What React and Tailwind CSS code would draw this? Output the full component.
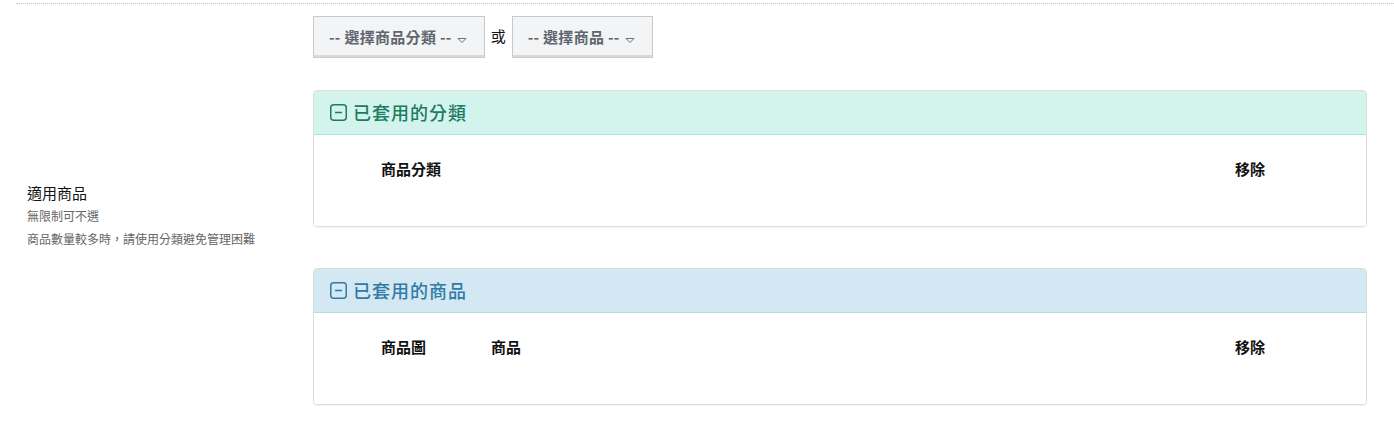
import React from "react";

const font = { fontFamily: '"Noto Sans CJK TC", "Noto Sans", sans-serif' };

function Caret() {
  return (
    <svg width="10" height="7" viewBox="0 0 10 7" className="ml-[5px] mt-[6px]">
      <path d="M1 1.5 L9 1.5 L5 5.5 Z" fill="none" stroke="#6b7280" strokeWidth="1" strokeLinejoin="round" />
    </svg>
  );
}

function MinusBox({ color }) {
  return (
    <svg width="17" height="17" viewBox="0 0 17 17" className="shrink-0">
      <rect x="0.75" y="0.75" width="15.5" height="15.5" rx="3" fill="none" stroke={color} strokeWidth="1.5" />
      <line x1="5" y1="8.5" x2="12" y2="8.5" stroke={color} strokeWidth="1.5" />
    </svg>
  );
}

function Panel({ title, headerBg, headerBorder, titleColor, children }) {
  return (
    <div className="rounded-[4px] border border-[#dcdcdc] shadow-[0_1px_1px_rgba(0,0,0,0.05)] overflow-hidden">
      <div
        className="h-[44px] flex items-center pl-[16px] gap-[6px] border-b"
        style={{ backgroundColor: headerBg, borderColor: headerBorder }}
      >
        <MinusBox color={titleColor} />
        <span className="text-[18px] font-medium tracking-[1px]" style={{ color: titleColor }}>
          {title}
        </span>
      </div>
      <div className="h-[91px] bg-white">{children}</div>
    </div>
  );
}

export default function App() {
  return (
    <div className="bg-white w-[1394px] h-[424px] pt-[3px]" style={font}>
      <div className="ml-4 border-t border-dotted border-[#c4c4c4] flex h-[421px]">
        <div className="w-[297px] shrink-0 flex items-center pl-[11px] pt-[1px]">
          <div>
            <div className="text-[15px] text-[#111] leading-[20px]">適用商品</div>
            <div className="text-[12px] text-[#666] leading-[16px] mt-[5px]">無限制可不選</div>
            <div className="text-[12px] text-[#666] leading-[16px] mt-[7px]">商品數量較多時，請使用分類避免管理困難</div>
          </div>
        </div>
        <div className="w-[1054px] pt-[12px]">
          <div className="flex items-center gap-[6px] h-[42px]">
            <button className="h-[42px] pl-[15px] pr-[17px] flex items-center bg-[#f3f4f5] border border-[#c9c9c9] shadow-[inset_0_-2px_0_#dadada] text-[15px] font-bold text-[#5f6670] tracking-[0.3px] whitespace-pre">
              {"-- 選擇商品分類 --"}
              <Caret />
            </button>
            <span className="text-[15px] text-[#111] mb-[2px]">或</span>
            <button className="h-[42px] pl-[15px] pr-[17px] flex items-center bg-[#f3f4f5] border border-[#c9c9c9] shadow-[inset_0_-2px_0_#dadada] text-[15px] font-bold text-[#5f6670] tracking-[0.3px] whitespace-pre">
              {"-- 選擇商品 --"}
              <Caret />
            </button>
          </div>
          <div className="mt-[32px]">
            <Panel title="已套用的分類" headerBg="#d2f4ed" headerBorder="#a6e8dc" titleColor="#1f7a64">
              <div className="flex justify-between pl-[67px] pr-[101px] pt-[23px] text-[15px] font-bold text-[#111]">
                <span>商品分類</span>
                <span>移除</span>
              </div>
            </Panel>
          </div>
          <div className="mt-[41px]">
            <Panel title="已套用的商品" headerBg="#d3e8f3" headerBorder="#b0dcea" titleColor="#2f7ba6">
              <div className="flex pl-[67px] pr-[101px] pt-[23px] text-[15px] font-bold text-[#111]">
                <span className="w-[110px]">商品圖</span>
                <span className="flex-1">商品</span>
                <span>移除</span>
              </div>
            </Panel>
          </div>
        </div>
      </div>
    </div>
  );
}
